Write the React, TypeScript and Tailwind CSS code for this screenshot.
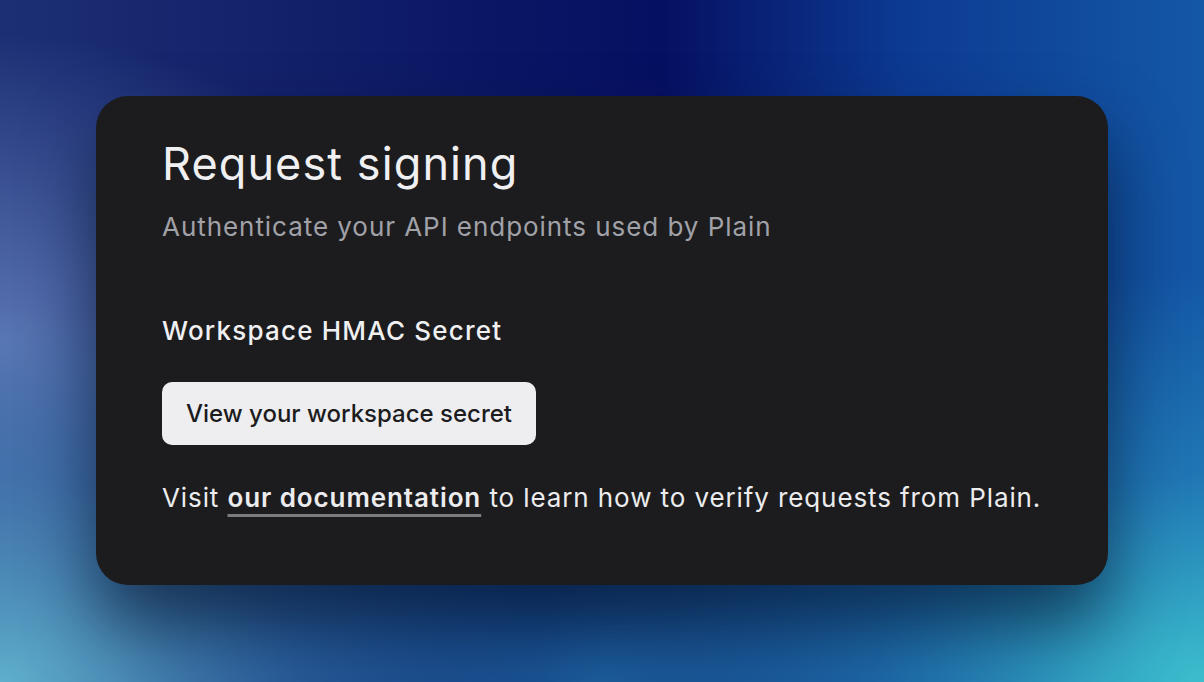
import React from "react";

const App = () => {
  return (
    <div className="relative h-[682px] w-[1204px] overflow-hidden bg-[linear-gradient(90deg,#1d2f74_0%,#0b1764_40%,#061062_55%,#0c3a92_75%,#1458a6_100%)] font-['Inter','Liberation_Sans',sans-serif]">
      <div className="absolute inset-0 bg-[radial-gradient(ellipse_35%_45%_at_0%_50%,rgba(110,140,200,0.75),transparent_100%)]" />
      <div className="absolute inset-0 bg-[radial-gradient(ellipse_55%_60%_at_100%_100%,rgba(60,190,205,1),rgba(40,140,190,0.6)_50%,transparent_100%)]" />
      <div className="absolute inset-0 bg-[radial-gradient(ellipse_45%_55%_at_0%_100%,rgba(95,175,205,1),rgba(70,140,190,0.5)_55%,transparent_100%)]" />
      <div className="absolute inset-0 bg-[radial-gradient(ellipse_40%_40%_at_50%_100%,rgba(30,100,160,0.9),transparent_100%)]" />

      <div className="relative px-[96px] pt-[96px]">
        <div className="h-[489px] rounded-[32px] bg-[#1c1c1e] px-[66px] pt-[42px] shadow-[0_40px_70px_rgba(5,20,45,0.65)]">
          <h1 className="text-[45px] leading-[52px] font-normal tracking-[1.1px] text-[#f0f0f2]">Request signing</h1>
          <p className="mt-[21px] text-[26px] leading-[32px] tracking-[0.95px] text-[#a1a1a8]">Authenticate your API endpoints used by Plain</p>

          <h2 className="mt-[72px] text-[26px] leading-[32px] font-medium tracking-[1.2px] text-[#f0f0f2]">Workspace HMAC Secret</h2>

          <button className="mt-[35px] h-[63px] rounded-[10px] bg-[#eeeef0] px-6 text-[24px] font-medium text-[#1c1c1e]">
            View your workspace secret
          </button>

          <p className="mt-[37px] text-[26px] leading-[32px] tracking-[0.9px] text-[#ececee]">
            Visit{" "}
            <a className="font-semibold underline decoration-[#7c7c80] decoration-[3px] underline-offset-[7px]">our documentation</a>{" "}
            to learn how to verify requests from Plain.
          </p>
        </div>
      </div>
    </div>
  );
};

export default App;
